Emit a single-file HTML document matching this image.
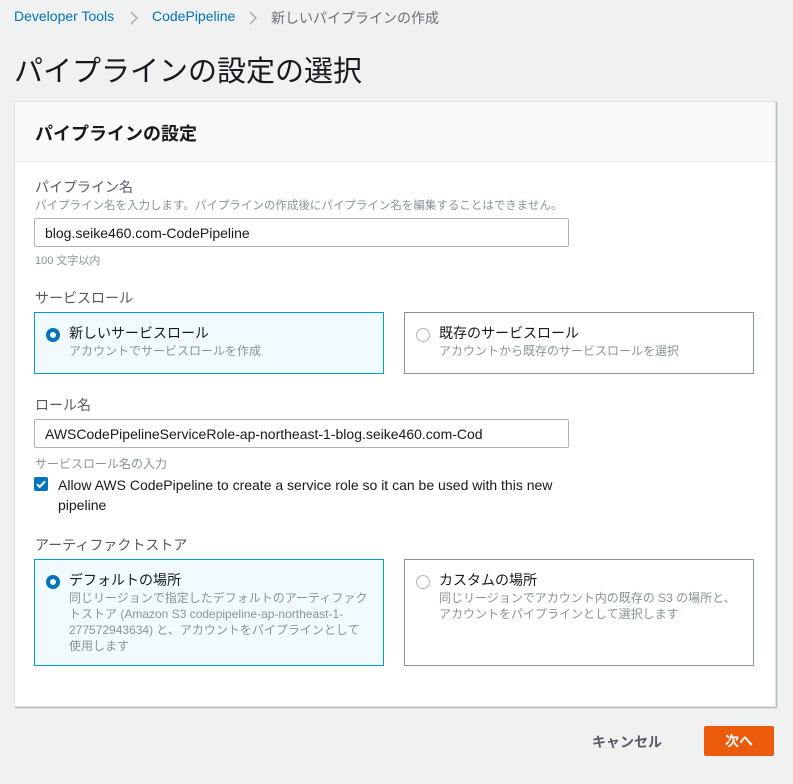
<!DOCTYPE html>
<html><head><meta charset="utf-8"><style>
*{margin:0;padding:0;box-sizing:border-box}
body{width:793px;height:784px;background:#f0f1f1;font-family:"Liberation Sans","Noto Sans CJK JP",sans-serif;color:#16191f;position:relative;overflow:hidden}
.a{position:absolute;white-space:nowrap}
.lbl{font-size:14px;color:#545b64}
.desc{font-size:12px;color:#879596}
.inp{position:absolute;left:34px;width:535px;height:29px;border:1px solid #aab7b8;background:#fff;font-size:14px;padding:6px 10px;color:#16191f;border-radius:2px}
.tile{position:absolute;border:1px solid #879596;background:#fff}
.tile.sel{border-color:#00a1c9;background:#f1faff}
.rad{position:absolute;left:11px;top:15px;width:14px;height:14px;border-radius:50%;border:1px solid #aab7b8;background:#fff}
.sel .rad{border:4px solid #0073bb}
.tt{position:absolute;left:34px;top:10px;font-size:14px;color:#16191f}
.td{position:absolute;left:34px;top:30px;font-size:12px;color:#879596;line-height:16px}
</style></head><body>
<div class="a" style="left:14px;top:8px;font-size:14px;color:#0073bb">Developer Tools</div>
<svg class="a" style="left:129px;top:10px" width="10" height="16" viewBox="0 0 10 16"><path d="M2 2l6 6-6 6" stroke="#aab7b8" stroke-width="1.6" fill="none"/></svg>
<div class="a" style="left:152px;top:8px;font-size:14px;color:#0073bb">CodePipeline</div>
<svg class="a" style="left:248px;top:10px" width="10" height="16" viewBox="0 0 10 16"><path d="M2 2l6 6-6 6" stroke="#aab7b8" stroke-width="1.6" fill="none"/></svg>
<div class="a" style="left:271px;top:8px;font-size:14px;color:#687078">新しいパイプラインの作成</div>
<div class="a" style="left:14px;top:48px;font-size:29px;color:#16191f">パイプラインの設定の選択</div>
<div style="position:absolute;left:14px;top:101px;width:762px;height:606px;background:#fff;border:1px solid #e0e2e3;box-shadow:1px 1px 1px rgba(0,28,36,.3)">
<div style="height:60px;background:#fafafa;border-bottom:1px solid #eaeded"></div>
</div>
<div class="a" style="left:35px;top:120px;font-size:18px;font-weight:bold">パイプラインの設定</div>
<div class="a lbl" style="left:35px;top:177px">パイプライン名</div>
<div class="a desc" style="left:35px;top:197px;font-size:11.5px">パイプライン名を入力します。パイプラインの作成後にパイプライン名を編集することはできません。</div>
<div class="inp" style="top:218px">blog.seike460.com-CodePipeline</div>
<div class="a desc" style="left:35px;top:252px;font-size:11px">100 文字以内</div>
<div class="a lbl" style="left:35px;top:288px">サービスロール</div>
<div class="tile sel" style="left:34px;top:312px;width:350px;height:62px"><div class="rad"></div><div class="tt">新しいサービスロール</div><div class="td">アカウントでサービスロールを作成</div></div>
<div class="tile" style="left:404px;top:312px;width:350px;height:62px"><div class="rad"></div><div class="tt">既存のサービスロール</div><div class="td">アカウントから既存のサービスロールを選択</div></div>
<div class="a lbl" style="left:35px;top:395px">ロール名</div>
<div class="inp" style="top:419px">AWSCodePipelineServiceRole-ap-northeast-1-blog.seike460.com-Cod</div>
<div class="a desc" style="left:35px;top:455px">サービスロール名の入力</div>
<div style="position:absolute;left:34px;top:477px;width:14px;height:14px;background:#0073bb;border-radius:2px">
<svg width="14" height="14" viewBox="0 0 14 14"><path d="M3 7.2l2.7 2.7L11 4.3" stroke="#fff" stroke-width="2" fill="none"/></svg></div>
<div class="a" style="left:58px;top:475px;font-size:14px;line-height:20px;white-space:normal;width:510px">Allow AWS CodePipeline to create a service role so it can be used with this new pipeline</div>
<div class="a lbl" style="left:35px;top:535px">アーティファクトストア</div>
<div class="tile sel" style="left:34px;top:559px;width:350px;height:107px"><div class="rad"></div><div class="tt">デフォルトの場所</div><div class="td" style="white-space:normal;width:300px">同じリージョンで指定したデフォルトのアーティファクトストア (Amazon S3 codepipeline-ap-northeast-1-277572943634) と、アカウントをパイプラインとして使用します</div></div>
<div class="tile" style="left:404px;top:559px;width:350px;height:107px"><div class="rad"></div><div class="tt">カスタムの場所</div><div class="td" style="white-space:normal;width:305px">同じリージョンでアカウント内の既存の S3 の場所と、アカウントをパイプラインとして選択します</div></div>
<div class="a" style="left:592px;top:732px;font-size:14px;font-weight:bold;color:#545b64">キャンセル</div>
<div style="position:absolute;left:704px;top:726px;width:70px;height:30px;background:#ec5a0c;border-radius:2px;color:#fff;font-weight:bold;font-size:14px;text-align:center;line-height:30px">次へ</div>
</body></html>
